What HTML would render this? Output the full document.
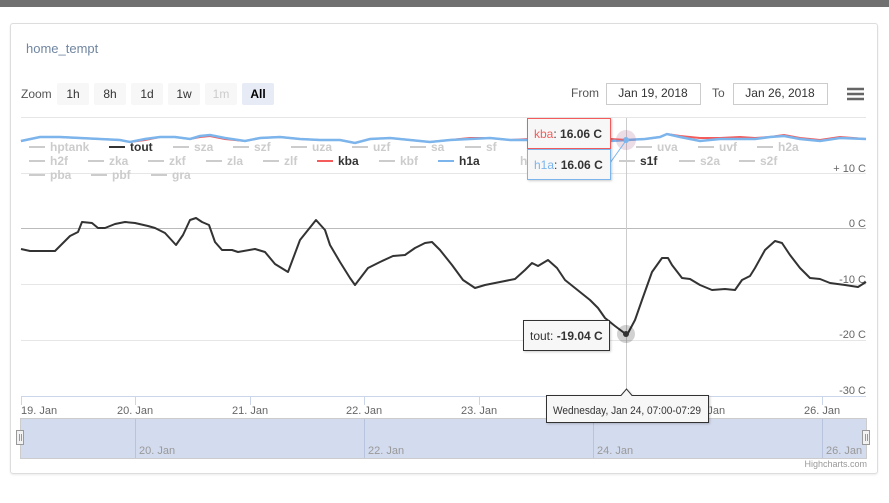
<!DOCTYPE html>
<html><head><meta charset="utf-8"><style>
body{margin:0;width:889px;height:503px;background:#fff;font-family:"Liberation Sans",sans-serif;overflow:hidden;position:relative}
.top{position:absolute;left:0;top:0;width:889px;height:7px;background:#707070}
.card{position:absolute;left:10px;top:23px;width:866px;height:449px;border:1px solid #ddd;border-radius:3px;box-shadow:0 1px 2px rgba(0,0,0,.08)}
svg{position:absolute;left:0;top:0}
</style></head><body>
<div class="top"></div>
<div class="card"></div>
<svg width="889" height="503" font-family="Liberation Sans, sans-serif">
<defs><filter id="sh" x="-10%" y="-10%" width="130%" height="140%"><feDropShadow dx="1" dy="1" stdDeviation="1" flood-opacity="0.2"/></filter></defs>
<text x="26" y="53" font-size="13" fill="#7186a0">home_tempt</text>
<text x="21" y="98" font-size="12" fill="#555">Zoom</text>
<g font-size="12" fill="#333" text-anchor="middle">
<rect x="57" y="83" width="32" height="22" rx="2" fill="#f7f7f7"/><text x="73" y="98">1h</text>
<rect x="94" y="83" width="32" height="22" rx="2" fill="#f7f7f7"/><text x="110" y="98">8h</text>
<rect x="131" y="83" width="32" height="22" rx="2" fill="#f7f7f7"/><text x="147" y="98">1d</text>
<rect x="168" y="83" width="32" height="22" rx="2" fill="#f7f7f7"/><text x="184" y="98">1w</text>
<rect x="205" y="83" width="32" height="22" rx="2" fill="#f7f7f7"/><text x="221" y="98" fill="#ccc">1m</text>
<rect x="242" y="83" width="32" height="22" rx="2" fill="#e6ebf5"/><text x="258" y="98" font-weight="bold" fill="#000">All</text>
</g>
<text x="571" y="97" font-size="12" fill="#555">From</text>
<rect x="606.5" y="83.5" width="94" height="21" fill="#fff" stroke="#ccc"/>
<text x="653" y="97" font-size="12" fill="#333" text-anchor="middle">Jan 19, 2018</text>
<text x="712" y="97" font-size="12" fill="#555">To</text>
<rect x="733.5" y="83.5" width="94" height="21" fill="#fff" stroke="#ccc"/>
<text x="780" y="97" font-size="12" fill="#333" text-anchor="middle">Jan 26, 2018</text>
<g stroke="#666" stroke-width="2.5"><line x1="847" y1="89" x2="864" y2="89"/><line x1="847" y1="94" x2="864" y2="94"/><line x1="847" y1="99" x2="864" y2="99"/></g>
<g stroke="#e6e6e6" stroke-width="1">
<line x1="21" y1="117.5" x2="866" y2="117.5"/><line x1="21" y1="173.5" x2="866" y2="173.5"/>
<line x1="21" y1="284.5" x2="866" y2="284.5"/><line x1="21" y1="340.5" x2="866" y2="340.5"/>
</g>
<line x1="21" y1="228.5" x2="866" y2="228.5" stroke="#bbb"/>
<line x1="21" y1="396.5" x2="866" y2="396.5" stroke="#ccd6eb"/>
<g stroke="#ccd6eb"><line x1="21.5" y1="397" x2="21.5" y2="405"/><line x1="135.5" y1="397" x2="135.5" y2="405"/><line x1="250.5" y1="397" x2="250.5" y2="405"/><line x1="364.5" y1="397" x2="364.5" y2="405"/><line x1="479.5" y1="397" x2="479.5" y2="405"/><line x1="593.5" y1="397" x2="593.5" y2="405"/><line x1="708.5" y1="397" x2="708.5" y2="405"/><line x1="822.5" y1="397" x2="822.5" y2="405"/></g>
<g font-size="11" fill="#666" text-anchor="end">
<text x="866" y="172">+ 10 C</text><text x="866" y="227">0 C</text><text x="866" y="283">-10 C</text><text x="866" y="338">-20 C</text><text x="866" y="394">-30 C</text>
</g>
<g font-size="11" fill="#666">
<text x="21" y="414">19. Jan</text><text x="117" y="414">20. Jan</text><text x="232" y="414">21. Jan</text><text x="346" y="414">22. Jan</text><text x="461" y="414">23. Jan</text><text x="689" y="414">24. Jan</text><text x="804" y="414">26. Jan</text>
</g>
<polyline fill="none" stroke="#f45b5b" stroke-width="2" points="21,141 40,137 60,137 80,138 100,139 120,140 130,142 145,140 160,137 175,137 190,139 200,137 210,136 225,139 245,141 260,138 280,137 300,139 320,140 340,140 355,143 370,139 390,138 410,140 430,142 450,140 470,138 490,138 510,140 530,139 550,136 570,135 590,137 610,139 627,140 645,139 660,137 667,134 680,136 700,138 720,138 740,137 755,138 770,137 784,135 800,138 820,140 840,137 866,139"/>
<polyline fill="none" stroke="#7cb5ec" stroke-width="2.5" points="21,141 40,137 60,137 80,138 100,139 120,140 130,142 145,139 160,137 175,137 190,139 200,136 210,135 225,138 245,141 260,138 280,137 300,139 320,140 340,140 355,143 370,139 390,138 410,140 430,142 450,140 470,139 490,138 510,140 530,140 550,140 570,142 590,144 610,141 627,140 645,139 660,137 667,134 680,137 700,141 720,139 740,139 755,139 770,137 784,136 800,139 820,141 840,138 866,139"/>
<g font-size="12" font-weight="bold" fill="#ccc">
<g stroke="#ccc" stroke-width="2">
<line x1="29" y1="147" x2="45" y2="147"/><line x1="173" y1="147" x2="189" y2="147"/><line x1="233" y1="147" x2="249" y2="147"/><line x1="291" y1="147" x2="307" y2="147"/><line x1="352" y1="147" x2="368" y2="147"/><line x1="410" y1="147" x2="426" y2="147"/><line x1="465" y1="147" x2="481" y2="147"/><line x1="636" y1="147" x2="652" y2="147"/><line x1="698" y1="147" x2="714" y2="147"/><line x1="757" y1="147" x2="773" y2="147"/>
<line x1="29" y1="161" x2="45" y2="161"/><line x1="88" y1="161" x2="104" y2="161"/><line x1="148" y1="161" x2="164" y2="161"/><line x1="206" y1="161" x2="222" y2="161"/><line x1="263" y1="161" x2="279" y2="161"/><line x1="379" y1="161" x2="395" y2="161"/><line x1="619" y1="161" x2="635" y2="161"/><line x1="679" y1="161" x2="695" y2="161"/><line x1="739" y1="161" x2="755" y2="161"/>
<line x1="29" y1="175" x2="45" y2="175"/><line x1="91" y1="175" x2="107" y2="175"/><line x1="151" y1="175" x2="167" y2="175"/>
</g>
<line x1="109" y1="147" x2="125" y2="147" stroke="#333" stroke-width="2"/>
<line x1="317" y1="161" x2="333" y2="161" stroke="#f45b5b" stroke-width="2"/>
<line x1="438" y1="161" x2="454" y2="161" stroke="#7cb5ec" stroke-width="2"/>
<text x="50" y="151">hptank</text><text x="130" y="151" fill="#333">tout</text><text x="194" y="151">sza</text><text x="254" y="151">szf</text><text x="312" y="151">uza</text><text x="373" y="151">uzf</text><text x="431" y="151">sa</text><text x="486" y="151">sf</text><text x="657" y="151">uva</text><text x="719" y="151">uvf</text><text x="778" y="151">h2a</text>
<text x="50" y="165">h2f</text><text x="109" y="165">zka</text><text x="169" y="165">zkf</text><text x="227" y="165">zla</text><text x="284" y="165">zlf</text><text x="338" y="165" fill="#333">kba</text><text x="400" y="165">kbf</text><text x="459" y="165" fill="#333">h1a</text><text x="520" y="165">h</text><text x="640" y="165" fill="#333">s1f</text><text x="700" y="165">s2a</text><text x="760" y="165">s2f</text>
<text x="50" y="179">pba</text><text x="112" y="179">pbf</text><text x="172" y="179">gra</text>
</g>
<line x1="626.5" y1="118" x2="626.5" y2="396" stroke="#ccc"/>
<polyline fill="none" stroke="#333" stroke-width="2" stroke-linejoin="round" points="21,249 30,251 40,251 50,251 55,251 62,244 70,236 78,232 82,222 92,223 98,228 105,228 115,224 125,222 135,223 148,226 155,228 165,233 176,245 183,235 190,220 196,218 202,222 209,225 215,242 222,250 232,250 238,252 255,249 265,252 275,264 288,272 300,240 308,230 316,220 325,230 330,245 340,262 350,278 355,285 368,268 380,262 393,256 405,255 415,248 425,243 432,242 440,250 452,265 463,280 475,288 485,285 500,282 515,279 525,270 532,263 538,266 548,260 557,268 565,280 580,292 590,300 598,308 605,318 615,326 627,335 635,320 642,300 652,272 662,258 668,258 672,265 682,278 690,279 700,285 712,290 725,289 735,290 742,280 750,276 755,268 765,250 775,241 782,243 790,255 800,268 810,278 820,279 830,283 845,285 858,287 866,282"/>
<circle cx="626" cy="334" r="9" fill="#000" fill-opacity=".18"/><circle cx="626" cy="334" r="3" fill="#333"/>
<circle cx="626" cy="140" r="10" fill="#a05080" fill-opacity=".2"/><circle cx="626" cy="140" r="3" fill="#7cb5ec"/>
<rect x="523.5" y="320.5" width="86" height="30" fill="#f7f7f7" stroke="#333" filter="url(#sh)"/>
<text x="530" y="340" font-size="12" fill="#333">tout: <tspan font-weight="bold">-19.04 C</tspan></text>
<line x1="555" y1="133" x2="624" y2="140" stroke="#f45b5b"/>
<rect x="527.5" y="118.5" width="83" height="30" fill="#f7f7f7" stroke="#f45b5b" filter="url(#sh)"/>
<text x="534" y="138" font-size="12" fill="#333"><tspan fill="#f45b5b">kba</tspan>: <tspan font-weight="bold">16.06 C</tspan></text>
<line x1="610" y1="163" x2="625" y2="142" stroke="#7cb5ec"/>
<rect x="527.5" y="149.5" width="83" height="30" fill="#f7f7f7" stroke="#7cb5ec" filter="url(#sh)"/>
<text x="534" y="169" font-size="12" fill="#333"><tspan fill="#7cb5ec">h1a</tspan>: <tspan font-weight="bold">16.06 C</tspan></text>
<rect x="20.5" y="418.5" width="846" height="40" fill="#d3dbee" stroke="#ccc"/>
<g stroke="#b8c3de"><line x1="135.5" y1="419" x2="135.5" y2="458"/><line x1="364.5" y1="419" x2="364.5" y2="458"/><line x1="593.5" y1="419" x2="593.5" y2="458"/><line x1="822.5" y1="419" x2="822.5" y2="458"/></g>
<g font-size="11" fill="#999"><text x="139" y="454">20. Jan</text><text x="368" y="454">22. Jan</text><text x="597" y="454">24. Jan</text><text x="826" y="454">26. Jan</text></g>
<rect x="16.5" y="430.5" width="7" height="14" fill="#f2f2f2" stroke="#999"/><line x1="19.5" y1="434" x2="19.5" y2="441" stroke="#999"/><line x1="21.5" y1="434" x2="21.5" y2="441" stroke="#999"/>
<rect x="862.5" y="430.5" width="7" height="14" fill="#f2f2f2" stroke="#999"/><line x1="865.5" y1="434" x2="865.5" y2="441" stroke="#999"/><line x1="867.5" y1="434" x2="867.5" y2="441" stroke="#999"/>
<text x="867" y="467" font-size="9" fill="#999" text-anchor="end">Highcharts.com</text>
<path d="M546.5 395.5 H621 L626.5 389 L632 395.5 H708.5 V422.5 H546.5 Z" fill="#f7f7f7" stroke="#333" filter="url(#sh)"/>
<text x="553" y="414" font-size="11" fill="#333" textLength="148" lengthAdjust="spacingAndGlyphs">Wednesday, Jan 24, 07:00-07:29</text>
</svg>
</body></html>
